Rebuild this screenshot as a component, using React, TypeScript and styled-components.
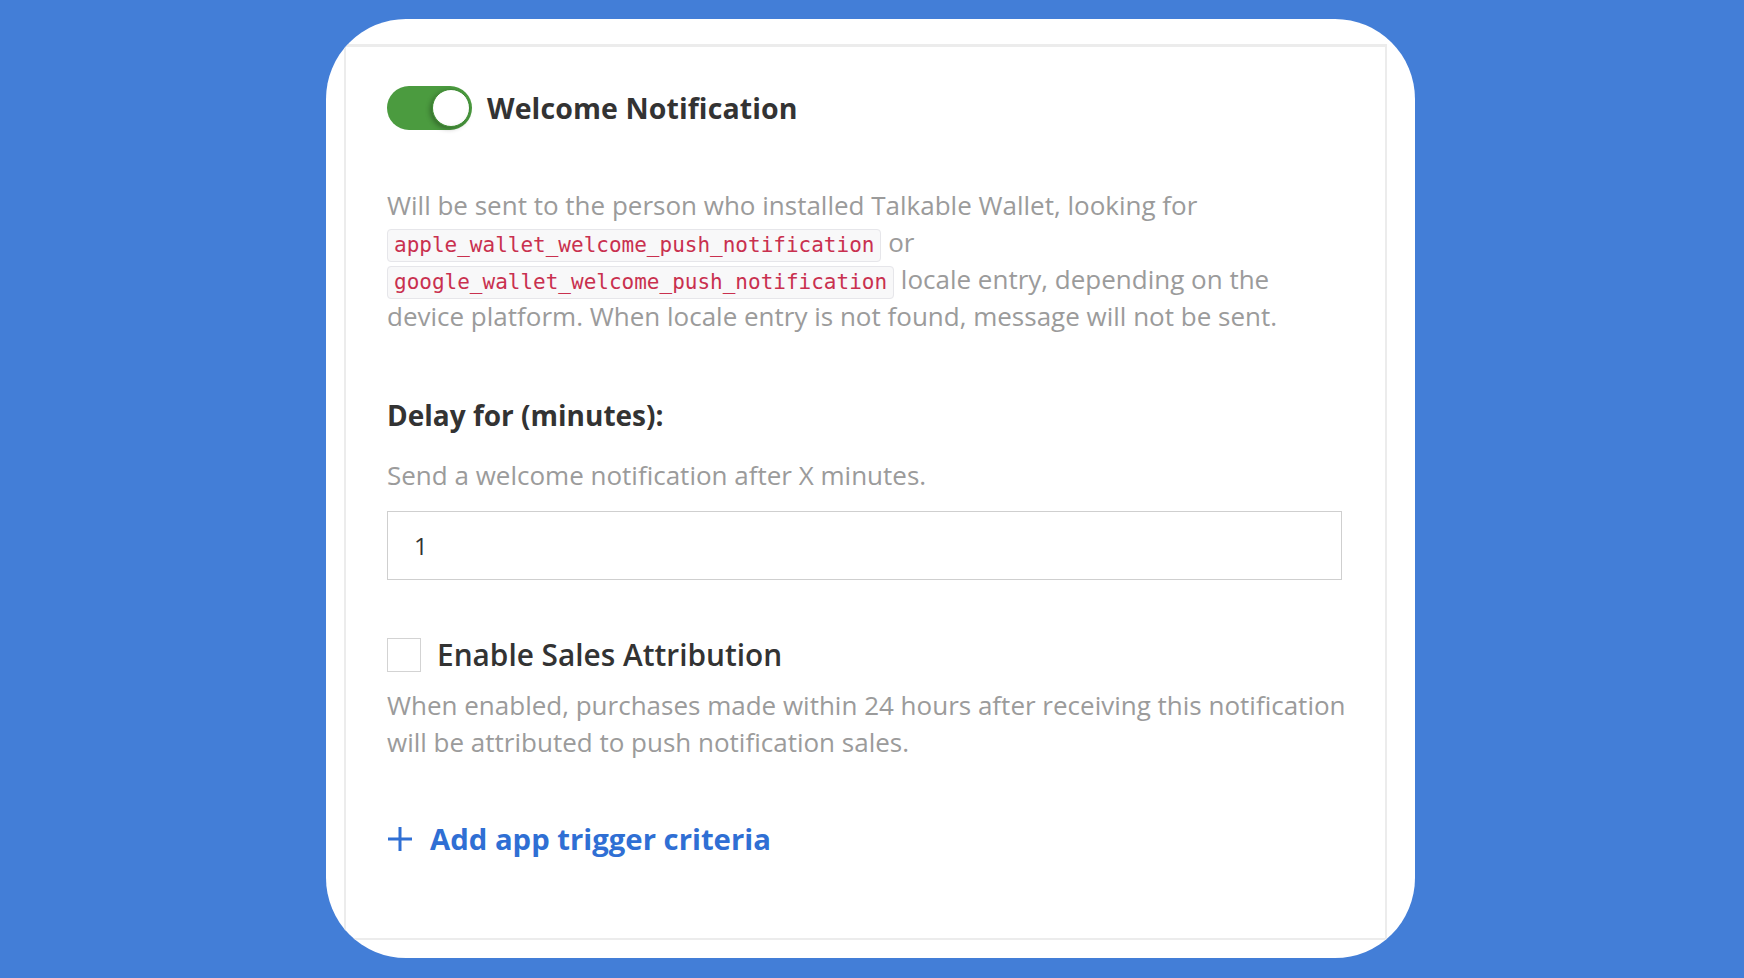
import React, { useState } from "react";
import styled, { createGlobalStyle } from "styled-components";

const GlobalStyle = createGlobalStyle`
	html, body {
		margin: 0;
		padding: 0;
		background: #437ed7;
	}
	body {
		font-family: "Open Sans", "Liberation Sans", sans-serif;
	}
	* {
		box-sizing: border-box;
	}
`;

const StyledPage = styled.div`
	width: 1744px;
	height: 978px;
	padding: 19px 0 0 326px;
	background: #437ed7;
`;

const StyledOuterCard = styled.div`
	width: 1089px;
	height: 939px;
	background: #ffffff;
	border-radius: 80px;
	overflow: hidden;
	padding: 25px 0 0 18px;
`;

const StyledPanel = styled.div`
	width: 1043px;
	height: 896px;
	border: 2px solid #ececec;
	border-top-width: 3px;
	padding: 39px 0 0 41px;
	display: flex;
	flex-direction: column;
`;

const StyledHeaderRow = styled.div`
	display: flex;
	align-items: center;
	gap: 15px;
	height: 44px;
`;

const StyledToggle = styled.button<{ $on: boolean }>`
	position: relative;
	width: 85px;
	height: 44px;
	border: none;
	padding: 0;
	border-radius: 22px;
	background: ${(p) => (p.$on ? "#4b9b3f" : "#d6d6d6")};
	cursor: pointer;
	flex-shrink: 0;
`;

const StyledKnob = styled.span<{ $on: boolean }>`
	position: absolute;
	top: 3px;
	left: ${(p) => (p.$on ? "45px" : "3px")};
	width: 38px;
	height: 38px;
	border-radius: 50%;
	background: radial-gradient(circle at 45% 40%, #ffffff 60%, #f0f0f0 100%);
	border: 1px solid #3f8a34;
	box-shadow: -2px 2px 5px rgba(0, 0, 0, 0.3);
`;

const StyledTitle = styled.h2`
	margin: 0;
	font-size: 28.5px;
	font-weight: 700;
	color: #333333;
	letter-spacing: 0.1px;
`;

const StyledHelp = styled.p<{ $top: number }>`
	margin: ${(p) => p.$top}px 0 0;
	width: 960px;
	font-size: 26px;
	line-height: 37px;
	color: #9b9b9b;
	font-weight: 400;
`;

const StyledCode = styled.code`
	font-family: "DejaVu Sans Mono", "Liberation Mono", monospace;
	font-size: 21px;
	line-height: 1;
	color: #c9304f;
	background: #f8f8f9;
	border: 1px solid #e6e6ea;
	border-radius: 4px;
	padding: 3px 6px 4px;
`;

const StyledFieldLabel = styled.h3`
	margin: 62px 0 0;
	font-size: 28px;
	line-height: 36px;
	font-weight: 700;
	color: #333333;
`;

const StyledInput = styled.input`
	margin-top: 17px;
	width: 955px;
	height: 69px;
	border: 1.5px solid #cfcfcf;
	border-radius: 0;
	padding: 0 26px;
	font-family: "Open Sans", "Liberation Sans", sans-serif;
	font-size: 24px;
	color: #333333;
	outline: none;
`;

const StyledCheckRow = styled.label`
	margin-top: 57px;
	display: flex;
	align-items: center;
	gap: 16px;
	height: 35px;
	cursor: pointer;
`;

const StyledCheckbox = styled.span<{ $checked: boolean }>`
	width: 34px;
	height: 34px;
	border: 1.5px solid #d3d3d3;
	background: ${(p) => (p.$checked ? "#4b9b3f" : "#ffffff")};
	flex-shrink: 0;
`;

const StyledCheckLabel = styled.span`
	font-size: 29.8px;
	font-weight: 600;
	color: #333333;
`;

const StyledAddLink = styled.a`
	margin-top: 60px;
	display: flex;
	align-items: center;
	gap: 17px;
	height: 36px;
	color: #2f6fd4;
	font-size: 29.3px;
	font-weight: 700;
	text-decoration: none;
	cursor: pointer;
`;

const PlusIcon = () => (
	<svg width="26" height="26" viewBox="0 0 26 26">
		<path d="M13 1 V25 M1 13 H25" stroke="#2f6fd4" strokeWidth="3" fill="none" />
	</svg>
);

const App = () => {
	const [enabled, setEnabled] = useState(true);
	const [attribution, setAttribution] = useState(false);

	return (
		<>
			<GlobalStyle />
			<StyledPage>
				<StyledOuterCard>
					<StyledPanel>
						<StyledHeaderRow>
							<StyledToggle $on={enabled} onClick={() => setEnabled(!enabled)}>
								<StyledKnob $on={enabled} />
							</StyledToggle>
							<StyledTitle>Welcome Notification</StyledTitle>
						</StyledHeaderRow>

						<StyledHelp $top={57}>
							Will be sent to the person who installed Talkable Wallet, looking for{" "}
							<StyledCode>apple_wallet_welcome_push_notification</StyledCode> or{" "}
							<StyledCode>google_wallet_welcome_push_notification</StyledCode> locale
							entry, depending on the device platform. When locale entry is not
							found, message will not be sent.
						</StyledHelp>

						<StyledFieldLabel>Delay for (minutes):</StyledFieldLabel>
						<StyledHelp $top={24}>Send a welcome notification after X minutes.</StyledHelp>
						<StyledInput defaultValue="1" />

						<StyledCheckRow onClick={() => setAttribution(!attribution)}>
							<StyledCheckbox $checked={attribution} />
							<StyledCheckLabel>Enable Sales Attribution</StyledCheckLabel>
						</StyledCheckRow>
						<StyledHelp $top={15}>
							When enabled, purchases made within 24 hours after receiving this
							notification will be attributed to push notification sales.
						</StyledHelp>

						<StyledAddLink>
							<PlusIcon />
							Add app trigger criteria
						</StyledAddLink>
					</StyledPanel>
				</StyledOuterCard>
			</StyledPage>
		</>
	);
};

export default App;
